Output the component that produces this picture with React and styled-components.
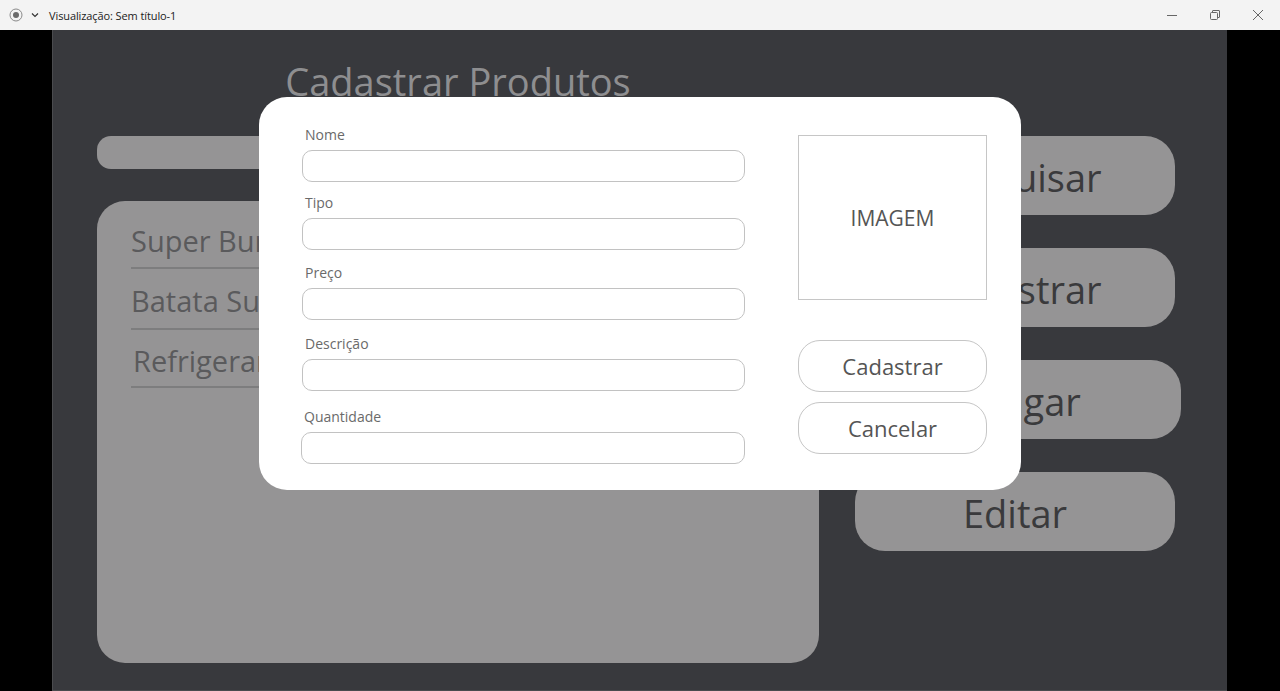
import React from 'react';
import styled, { createGlobalStyle } from 'styled-components';

const GlobalStyle = createGlobalStyle`
  html, body {
    margin: 0;
    padding: 0;
    background: #000;
    overflow: hidden;
  }
  * {
    box-sizing: border-box;
  }
`;

const Window = styled.div`
  width: 1280px;
  height: 691px;
  display: flex;
  flex-direction: column;
  font-family: 'Open Sans', 'Noto Sans', sans-serif;
`;

const TitleBar = styled.div`
  height: 30px;
  flex: 0 0 30px;
  background: #f3f3f3;
  display: flex;
  align-items: center;
  padding: 0 0 0 9px;
  color: #1b1b1b;
  font-size: 11px;
`;

const TitleLeft = styled.div`
  display: flex;
  align-items: center;
  gap: 7px;
  flex: 1;
`;

const TitleText = styled.span`
  margin-left: 2px;
  letter-spacing: -0.1px;
`;

const WindowControls = styled.div`
  display: flex;
  align-items: center;
`;

const ControlButton = styled.div`
  width: ${(p) => p.$w}px;
  height: 30px;
  display: flex;
  align-items: center;
  justify-content: center;
  color: #555;
`;

const Body = styled.div`
  flex: 1;
  display: flex;
  background: #000;
`;

const Canvas = styled.div`
  position: relative;
  margin-left: 52px;
  width: 1175px;
  height: 100%;
  background: #38393d;
  border-left: 1px solid #4a4b4e;
  border-bottom: 1px solid #4a4b4e;
  padding: 26px 0 0 44px;
  display: flex;
  flex-direction: column;
`;

const PageTitle = styled.h1`
  width: 722px;
  margin: 0 0 30px;
  text-align: center;
  font-size: 38px;
  line-height: 50px;
  font-weight: 400;
  color: #8e8e90;
`;

const Main = styled.div`
  display: grid;
  grid-template-columns: 722px 326px;
  column-gap: 36px;
  align-items: start;
`;

const LeftColumn = styled.div`
  display: flex;
  flex-direction: column;
  gap: 32px;
`;

const SearchBar = styled.div`
  height: 33px;
  border-radius: 14px;
  background: #959495;
`;

const ListPanel = styled.div`
  height: 462px;
  border-radius: 28px;
  background: #959495;
  padding: 8px 34px 0;
`;

const ListItem = styled.div`
  height: ${(p) => p.$h}px;
  display: flex;
  align-items: center;
  padding: 4px 0 0 ${(p) => p.$indent || 0}px;
  border-bottom: 2px solid #7d7d7e;
  font-size: 29px;
  color: #5a5a5c;
  white-space: nowrap;
`;

const ActionColumn = styled.div`
  display: flex;
  flex-direction: column;
  gap: 33px;
`;

const ActionButton = styled.div`
  width: ${(p) => (p.$wide ? 326 : 320)}px;
  height: 79px;
  border-radius: 30px;
  background: #959495;
  display: flex;
  align-items: center;
  justify-content: center;
  padding-top: 2px;
  font-size: 38px;
  color: #3a3a3c;
`;

const Modal = styled.div`
  position: absolute;
  left: 206px;
  top: 67px;
  width: 762px;
  height: 393px;
  background: #fff;
  border-radius: 28px;
  padding: 29px 34px 0 43px;
  display: flex;
  gap: 53px;
`;

const Form = styled.div`
  width: 443px;
  display: flex;
  flex-direction: column;
`;

const Field = styled.div`
  margin-top: ${(p) => p.$top}px;
  display: flex;
  flex-direction: column;
  gap: 6px;
`;

const Label = styled.label`
  height: 18px;
  line-height: 18px;
  padding-left: ${(p) => p.$indent ?? 3}px;
  font-size: 14px;
  color: #6a6a6a;
`;

const Input = styled.div`
  height: 32px;
  margin-left: ${(p) => p.$shift || 0}px;
  border: 1px solid #c2c2c2;
  border-radius: 10px;
  background: #fff;
`;

const SideColumn = styled.div`
  width: 189px;
  padding-top: 9px;
  display: flex;
  flex-direction: column;
`;

const ImageBox = styled.div`
  height: 165px;
  border: 1px solid #c6c6c6;
  display: flex;
  align-items: center;
  justify-content: center;
  padding-top: 1px;
  font-size: 21px;
  color: #555;
`;

const OutlineButton = styled.div`
  height: 52px;
  margin-top: ${(p) => p.$top}px;
  border: 1px solid #c6c6c6;
  border-radius: 22px;
  display: flex;
  align-items: center;
  justify-content: center;
  font-size: 22px;
  color: #555;
`;

const fields = [
  { label: 'Nome', top: 0 },
  { label: 'Tipo', top: 12 },
  { label: 'Preço', top: 14 },
  { label: 'Descrição', top: 15 },
  { label: 'Quantidade', top: 17, indent: 2, shift: -1 },
];

const products = [
  { name: 'Super Burguer', h: 60 },
  { name: 'Batata Super', h: 61 },
  { name: 'Refrigerante', h: 58, indent: 2 },
];

function RadioIcon() {
  return (
    <svg width="14" height="14" viewBox="0 0 14 14">
      <circle cx="7" cy="7" r="6" fill="none" stroke="#8a8a8a" strokeWidth="1" />
      <circle cx="7" cy="7" r="3" fill="#6a6a6a" />
    </svg>
  );
}

function ChevronIcon() {
  return (
    <svg width="10" height="10" viewBox="0 0 10 10">
      <path d="M2 3.5 L5 6.5 L8 3.5" fill="none" stroke="#333" strokeWidth="1.2" />
    </svg>
  );
}

export default function App() {
  return (
    <Window>
      <GlobalStyle />
      <TitleBar>
        <TitleLeft>
          <RadioIcon />
          <ChevronIcon />
          <TitleText>Visualização: Sem título-1</TitleText>
        </TitleLeft>
        <WindowControls>
          <ControlButton $w={44}>
            <svg width="12" height="12" viewBox="0 0 12 12">
              <path d="M1 6.5 H11" stroke="#666" strokeWidth="1" />
            </svg>
          </ControlButton>
          <ControlButton $w={42}>
            <svg width="12" height="12" viewBox="0 0 12 12">
              <rect x="1.5" y="3.5" width="7" height="7" rx="1" fill="none" stroke="#666" />
              <path d="M3.5 3.5 V2 Q3.5 1.5 4 1.5 H10 Q10.5 1.5 10.5 2 V8 Q10.5 8.5 10 8.5 H8.5" fill="none" stroke="#666" />
            </svg>
          </ControlButton>
          <ControlButton $w={44}>
            <svg width="12" height="12" viewBox="0 0 12 12">
              <path d="M1 1 L11 11 M11 1 L1 11" stroke="#666" strokeWidth="1" />
            </svg>
          </ControlButton>
        </WindowControls>
      </TitleBar>
      <Body>
        <Canvas>
          <PageTitle>Cadastrar Produtos</PageTitle>
          <Main>
            <LeftColumn>
              <SearchBar />
              <ListPanel>
                {products.map((p) => (
                  <ListItem key={p.name} $h={p.h} $indent={p.indent}>
                    {p.name}
                  </ListItem>
                ))}
              </ListPanel>
            </LeftColumn>
            <ActionColumn>
              <ActionButton>Pesquisar</ActionButton>
              <ActionButton>Cadastrar</ActionButton>
              <ActionButton $wide>Apagar</ActionButton>
              <ActionButton>Editar</ActionButton>
            </ActionColumn>
          </Main>

          <Modal>
            <Form>
              {fields.map((f) => (
                <Field key={f.label} $top={f.top}>
                  <Label $indent={f.indent}>{f.label}</Label>
                  <Input $shift={f.shift} />
                </Field>
              ))}
            </Form>
            <SideColumn>
              <ImageBox>IMAGEM</ImageBox>
              <OutlineButton $top={40}>Cadastrar</OutlineButton>
              <OutlineButton $top={10}>Cancelar</OutlineButton>
            </SideColumn>
          </Modal>
        </Canvas>
      </Body>
    </Window>
  );
}
